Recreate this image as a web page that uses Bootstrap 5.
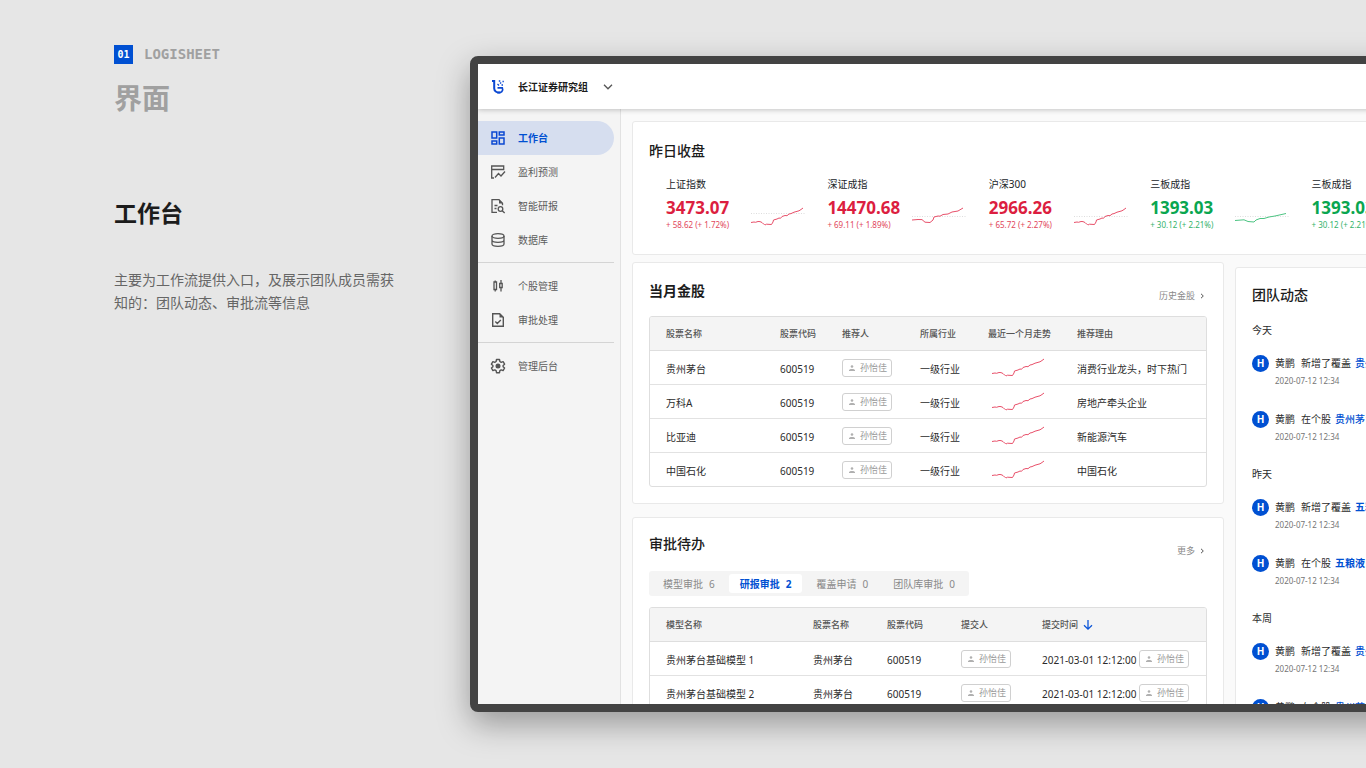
<!DOCTYPE html>
<html lang="zh-CN">
<head>
<meta charset="utf-8">
<meta name="viewport" content="width=device-width, initial-scale=1">
<title>Logisheet 工作台</title>
<link href="https://cdn.jsdelivr.net/npm/bootstrap@5.3.0/dist/css/bootstrap.min.css" rel="stylesheet">
<style>
  :root { --brand: #0050d2; --up: #dc1e40; --down: #0aa650; --line: #e2e2e2; }
  body { font-family: "Noto Sans", "Noto Sans CJK SC", sans-serif; font-size: 10px; line-height: 14px; color: #2b2b2b; background: #e6e6e6; overflow: hidden; }
  a { text-decoration: none; }
  svg { display: block; flex: none; }
  h1, h2, h3, p { margin: 0; }

  .stage { height: 100vh; }
  .intro { width: 470px; padding: 45px 68px 0 114px; flex: none; }
  .intro-no { width: 19px; height: 19px; background: var(--brand); color: #fff; font: bold 10px/19px "DejaVu Sans Mono", monospace; text-align: center; }
  .intro-brand { font: bold 14px/19px "DejaVu Sans Mono", monospace; color: #a0a0a0; }
  .intro h1 { font-size: 28px; line-height: 40px; font-weight: 700; color: #a0a0a0; margin-top: 14px; }
  .intro h2 { font-size: 23px; line-height: 34px; font-weight: 700; color: #1c1c1c; margin-top: 78px; }
  .intro p { font-size: 14px; line-height: 23px; color: #666; margin-top: 38px; }

  .device { margin: 56px -152px 56px 0; border: 8px solid #434343; border-radius: 8px; background: #fafafa; overflow: hidden; min-width: 0; box-shadow: 0 12px 32px rgba(0,0,0,.34); }
  .topbar { height: 45px; flex: none; background: #fff; padding: 0 12px; box-shadow: 0 1px 5px rgba(0,0,0,.22); z-index: 2; position: relative; }
  .team { border: 0; background: none; padding: 0; color: #1c1c1c; font-weight: 700; gap: 15px; }

  .side { width: 143px; flex: none; background: #f4f4f4; border-right: 1px solid var(--line); padding: 12px 6px 0 0; }
  .side a { height: 34px; padding-left: 12px; gap: 12px; color: #5c5c5c; }
  .side a.active { background: #d6deef; color: var(--brand); font-weight: 700; border-radius: 0 17px 17px 0; }
  .side hr { margin: 5px 0 6px; border-top: 1px solid #d4d4d4; opacity: 1; }

  .work { padding: 12px 12px 0 11px; min-width: 0; }
  .panel { background: #fff; border: 1px solid #e9e9e9; border-radius: 3px; padding: 0 16px; }
  .panel h3 { font-size: 14px; line-height: 20px; font-weight: 500; color: #1c1c1c; }
  .quotes { padding-top: 19px; padding-bottom: 23px; }
  .quote-grid { display: grid; grid-template-columns: repeat(5, 1fr); margin: 16px 8px 0 17px; }
  .quote-text { width: 85px; flex: none; white-space: nowrap; }
  .quote-value { font-size: 17px; line-height: 22px; font-weight: 700; margin-top: 6px; }
  .quote-diff { font-size: 8px; line-height: 12px; opacity: .85; }
  .up { color: var(--up); }
  .down { color: var(--down); }
  .quote-grid svg { margin-top: 29px; }

  .columns { margin-top: 7px; gap: 11px; }
  .stack { gap: 13px; min-width: 0; }
  .picks { padding-top: 18px; padding-bottom: 16px; }
  .picks-head { margin-bottom: 13px; }
  .todo { padding-top: 16px; padding-bottom: 16px; }
  .more { font-size: 9px; color: #8a8a8a; gap: 4px; padding: 8px 2px 0 0; }
  .todo .more { padding-top: 10px; }

  .frame { border: 1px solid #dedede; border-radius: 3px; overflow: hidden; }
  .grid-table { width: 100%; table-layout: fixed; border-collapse: separate; border-spacing: 0; }
  .grid-table th, .grid-table td { height: 34px; padding: 0; white-space: nowrap; vertical-align: middle; border-bottom: 1px solid var(--line); }
  .grid-table td { padding-top: 3px; }
  .grid-table th { background: #f4f4f4; font-size: 9px; font-weight: 500; color: #555; border-color: #dedede; }
  .grid-table th:first-child, .grid-table td:first-child { padding-left: 16px; }
  .grid-table tr:last-child td { border-bottom: 0; height: 33px; }
  .grid-table td.mid { padding-top: 0; }
  .tag { display: inline-flex; align-items: center; gap: 4px; height: 18px; padding: 0 4px 0 5px; border: 1px solid #d0d0d0; border-radius: 3px; font-size: 9px; color: #999; vertical-align: middle; }

  .tabs { background: #f4f4f4; border-radius: 3px; padding: 3px; gap: 3px; width: fit-content; margin: 13px 0 11px; }
  .tabs button { border: 0; background: none; height: 19px; padding: 0 11px; gap: 6px; color: #8a8a8a; border-radius: 3px; }
  .tabs button.active { background: #fff; color: var(--brand); font-weight: 700; }

  .feed { width: 263px; flex: none; margin-top: 5px; padding-top: 17px; }
  .feed h3 { margin-bottom: 18px; }
  .feed h4 { font-size: 10px; line-height: 14px; font-weight: 400; margin: 0 0 18px; }
  .feed ul { margin: 0; }
  .feed li { height: 56px; gap: 6px; }
  .face { width: 17px; height: 17px; border-radius: 50%; background: var(--brand); color: #fff; font-weight: 700; line-height: 17px; text-align: center; flex: none; }
  .feed-line { line-height: 17px; white-space: nowrap; }
  .feed-who { margin-right: 6px; }
  .feed-line a { color: var(--brand); font-weight: 500; }
  .feed time { display: block; font-size: 8px; line-height: 12px; color: #757575; margin-top: 3px; }
</style>
</head>
<body>
<svg width="0" height="0" class="position-absolute" aria-hidden="true">
  <symbol id="person" viewBox="0 0 8 8"><circle cx="4" cy="2.500" r="1.300" fill="#b0b0b0"/><path d="M1 7V6.300C1.300 5.200 2.500 4.900 4 4.900S6.700 5.200 7 6.300V7z" fill="#b0b0b0"/></symbol>
  <symbol id="chev" viewBox="0 0 6 6"><path d="M2 .8 4.300 3 2 5.200" fill="none" stroke="#555" stroke-width="1"/></symbol>
  <symbol id="spark" viewBox="0 0 54 22"><path d="M0 16.500 3 16 4.500 16.300 7 15.500 9 15.600 11 16.500 12.500 18 13.500 18.500 14 19 15.500 18.200 20.500 18.500 22 16 22.500 14 26 13 28 12 29.500 12.300 31 10.500 34 9.500 36 9.700 38 8 40 7.600 43 6.200 48 4.800 50 3.500 52 2" fill="none" stroke="#e8506a" stroke-width="1"/></symbol>
</svg>
<div class="stage d-flex">
  <section class="intro">
    <div class="d-flex align-items-center" style="gap:11px"><span class="intro-no">01</span><span class="intro-brand">LOGISHEET</span></div>
    <h1>界面</h1>
    <h2>工作台</h2>
    <p>主要为工作流提供入口，及展示团队成员需获知的：团队动态、审批流等信息</p>
  </section>

  <div class="device d-flex flex-column flex-grow-1">
    <header class="topbar d-flex align-items-center">
      <svg width="16" height="16" viewBox="0 0 16 16" fill="none" stroke="#0b48d2"><path d="M2 2h2.200v7.500c0 3 3 4.300 6 4" stroke-width="2"/><path d="M7.500 8.800h4.800c1.400 3-1 5.300-5 4.800" stroke-width="1.700"/><path d="M7.500 5l1.500 1.500M10 4.500l1.200-1M8.800 2h1.500M12.500 2.500h1.300M11.500 6h1.500" stroke-width="1.300"/></svg>
      <button class="team d-flex align-items-center ms-2 ps-1" type="button">长江证券研究组
        <svg width="10" height="8" viewBox="0 0 10 8"><path d="M1 1.800 5 5.800 9 1.800" fill="none" stroke="#555" stroke-width="1.300"/></svg></button>
    </header>
    <div class="d-flex flex-grow-1" style="min-height:0">
      <nav class="side">
        <a href="#" class="active d-flex align-items-center"><svg width="16" height="16" viewBox="0 0 16 16" fill="none" stroke="#0b48d2" stroke-width="1.500"><path d="M2 2h4.700v6H2zM9.300 2H14v3H9.300zM2 11h4.700v3H2zM9.300 8H14v6H9.300z"/></svg>工作台</a>
        <a href="#" class="d-flex align-items-center"><svg width="16" height="16" viewBox="0 0 16 16" fill="none" stroke="#555" stroke-width="1.300"><path d="M4 14H1.700V2h12v3.500h-12M5 13.500l3.500-4 2.500 2.500 4-4.500"/></svg>盈利预测</a>
        <a href="#" class="d-flex align-items-center"><svg width="16" height="16" viewBox="0 0 16 16" fill="none" stroke="#555" stroke-width="1.300"><path d="M7 14.300H2V1.700h7l3.500 3.500v2M4.500 7.500h3M4.500 10.500h2"/><path d="M9 1.500v4h4z" fill="#555" stroke="none"/><circle cx="10.500" cy="11" r="2.300"/><path d="m12.200 12.700 2.500 2.300"/></svg>智能研报</a>
        <a href="#" class="d-flex align-items-center"><svg width="16" height="16" viewBox="0 0 16 16" fill="none" stroke="#555" stroke-width="1.300"><ellipse cx="8" cy="4" rx="6" ry="2.300"/><path d="M2 4v8c0 1.300 2.700 2.300 6 2.300s6-1 6-2.300V4M2 8c0 1.300 2.700 2.300 6 2.300S14 9.300 14 8"/></svg>数据库</a>
        <hr>
        <a href="#" class="d-flex align-items-center"><svg width="16" height="16" viewBox="0 0 16 16" fill="none" stroke="#555" stroke-width="1.300"><path d="M4 4h2.500v7.500H4zM5.200 2.500V4M5.200 11.500V13.500M9.700 5.500h2.500v4H9.700zM11 2v3.500M11 9.500v4"/></svg>个股管理</a>
        <a href="#" class="d-flex align-items-center"><svg width="16" height="16" viewBox="0 0 16 16" fill="none" stroke="#555" stroke-width="1.400"><path d="M2.700 1.700h7L13.300 5.200v9.100H2.700zM5.300 9.500l2 2 3.500-3.500"/><path d="M9.500 1.500v4h4z" fill="#555" stroke="none"/></svg>审批处理</a>
        <hr>
        <a href="#" class="d-flex align-items-center"><svg width="16" height="16" viewBox="0 0 16 16" fill="none" stroke="#555" stroke-width="1.400" stroke-linejoin="round"><path d="M6.500 1.500h3l.4 2 1.300.8 1.900-.7 1.500 2.600-1.500 1.300v1.200l1.500 1.300-1.500 2.600-1.900-.7-1.300.8-.4 2h-3l-.4-2-1.300-.8-1.900.7L1.400 10l1.500-1.300V7.500L1.400 6.200l1.500-2.600 1.900.7 1.300-.8z"/><circle cx="8" cy="8" r="1.800" fill="#555"/></svg>管理后台</a>
      </nav>

      <main class="work flex-grow-1">
        <section class="panel quotes">
          <h3>昨日收盘</h3>
          <div class="quote-grid">
            <div class="d-flex up"><div class="quote-text"><div class="text-body">上证指数</div><div class="quote-value">3473.07</div><div class="quote-diff">+ 58.62 (+ 1.72%)</div></div><svg width="54" height="24" viewBox="0 0 54 24"><path d="M0 7.500h54" stroke="#ddd" stroke-dasharray="1 1.500"/><use href="#spark" width="54" height="22"/></svg></div>
            <div class="d-flex up"><div class="quote-text"><div class="text-body">深证成指</div><div class="quote-value">14470.68</div><div class="quote-diff">+ 69.11 (+ 1.89%)</div></div><svg width="54" height="24" viewBox="0 0 54 24"><path d="M0 10.500h54" stroke="#ddd" stroke-dasharray="1 1.500"/><path d="M0 14 6 13.500 10 13.600 13 16.200 18 16.500 21 14 22 11 26 10 28 10.200 31 8.500 36 8 40 6 46 5 51 2" fill="none" stroke="#e8506a"/></svg></div>
            <div class="d-flex up"><div class="quote-text"><div class="text-body">沪深300</div><div class="quote-value">2966.26</div><div class="quote-diff">+ 65.72 (+ 2.27%)</div></div><svg width="54" height="24" viewBox="0 0 54 24"><path d="M0 10.500h54" stroke="#ddd" stroke-dasharray="1 1.500"/><use href="#spark" width="54" height="22"/></svg></div>
            <div class="d-flex down"><div class="quote-text"><div class="text-body">三板成指</div><div class="quote-value">1393.03</div><div class="quote-diff">+ 30.12 (+ 2.21%)</div></div><svg width="54" height="24" viewBox="0 0 54 24"><path d="M0 10.500h54" stroke="#ddd" stroke-dasharray="1 1.500"/><path d="M0 14.500 9 13.800 13 15.500 19 16 21 14 25 12.500 29 12.500 34 11 40 10 51 7.500" fill="none" stroke="#4cc482"/></svg></div>
            <div class="d-flex down"><div class="quote-text"><div class="text-body">三板成指</div><div class="quote-value">1393.03</div><div class="quote-diff">+ 30.12 (+ 2.21%)</div></div></div>
          </div>
        </section>

        <div class="columns d-flex align-items-start">
          <div class="stack d-flex flex-column flex-grow-1">
            <section class="panel picks">
              <div class="picks-head d-flex justify-content-between"><h3 class="fw-bold">当月金股</h3><a href="#" class="more d-flex align-items-center">历史金股<svg width="6" height="6"><use href="#chev"/></svg></a></div>
              <div class="frame">
                <table class="grid-table">
                  <colgroup><col style="width:130px"><col style="width:62px"><col style="width:78px"><col style="width:68px"><col style="width:89px"><col></colgroup>
                  <thead><tr><th>股票名称</th><th>股票代码</th><th>推荐人</th><th>所属行业</th><th>最近一个月走势</th><th>推荐理由</th></tr></thead>
                  <tbody>
                    <tr><td>贵州茅台</td><td>600519</td><td class="mid"><span class="tag"><svg width="8" height="8"><use href="#person"/></svg>孙怡佳</span></td><td>一级行业</td><td class="mid"><svg width="54" height="22" class="ms-1"><use href="#spark"/></svg></td><td>消费行业龙头，时下热门</td></tr>
                    <tr><td>万科A</td><td>600519</td><td class="mid"><span class="tag"><svg width="8" height="8"><use href="#person"/></svg>孙怡佳</span></td><td>一级行业</td><td class="mid"><svg width="54" height="22" class="ms-1"><use href="#spark"/></svg></td><td>房地产牵头企业</td></tr>
                    <tr><td>比亚迪</td><td>600519</td><td class="mid"><span class="tag"><svg width="8" height="8"><use href="#person"/></svg>孙怡佳</span></td><td>一级行业</td><td class="mid"><svg width="54" height="22" class="ms-1"><use href="#spark"/></svg></td><td>新能源汽车</td></tr>
                    <tr><td>中国石化</td><td>600519</td><td class="mid"><span class="tag"><svg width="8" height="8"><use href="#person"/></svg>孙怡佳</span></td><td>一级行业</td><td class="mid"><svg width="54" height="22" class="ms-1"><use href="#spark"/></svg></td><td>中国石化</td></tr>
                  </tbody>
                </table>
              </div>
            </section>

            <section class="panel todo">
              <div class="d-flex justify-content-between"><h3>审批待办</h3><a href="#" class="more d-flex align-items-center">更多<svg width="6" height="6"><use href="#chev"/></svg></a></div>
              <div class="tabs d-flex" role="tablist">
                <button type="button" role="tab" class="d-flex align-items-center"><span>模型审批</span><span>6</span></button>
                <button type="button" role="tab" class="active d-flex align-items-center"><span>研报审批</span><span>2</span></button>
                <button type="button" role="tab" class="d-flex align-items-center"><span>覆盖申请</span><span>0</span></button>
                <button type="button" role="tab" class="d-flex align-items-center"><span>团队库审批</span><span>0</span></button>
              </div>
              <div class="frame">
                <table class="grid-table">
                  <colgroup><col style="width:163px"><col style="width:74px"><col style="width:74px"><col style="width:81px"><col style="width:97px"><col></colgroup>
                  <thead><tr><th>模型名称</th><th>股票名称</th><th>股票代码</th><th>提交人</th><th><span class="d-flex align-items-center gap-1">提交时间<svg width="12" height="12" viewBox="0 0 12 12"><path d="M6 1v9M2 6.200l4 4 4-4" fill="none" stroke="#0b55d8" stroke-width="1.300"/></svg></span></th><th></th></tr></thead>
                  <tbody>
                    <tr><td>贵州茅台基础模型 1</td><td>贵州茅台</td><td>600519</td><td class="mid"><span class="tag"><svg width="8" height="8"><use href="#person"/></svg>孙怡佳</span></td><td>2021-03-01 12:12:00</td><td class="mid"><span class="tag"><svg width="8" height="8"><use href="#person"/></svg>孙怡佳</span></td></tr>
                    <tr><td>贵州茅台基础模型 2</td><td>贵州茅台</td><td>600519</td><td class="mid"><span class="tag"><svg width="8" height="8"><use href="#person"/></svg>孙怡佳</span></td><td>2021-03-01 12:12:00</td><td class="mid"><span class="tag"><svg width="8" height="8"><use href="#person"/></svg>孙怡佳</span></td></tr>
                  </tbody>
                </table>
              </div>
            </section>
          </div>

          <aside class="panel feed">
            <h3>团队动态</h3>
            <h4>今天</h4>
            <ul class="list-unstyled">
              <li class="d-flex"><span class="face">H</span><div><div class="feed-line d-flex"><span class="feed-who">黄鹏</span><span class="me-1">新增了覆盖</span><a href="#">贵州茅台</a></div><time>2020-07-12 12:34</time></div></li>
              <li class="d-flex"><span class="face">H</span><div><div class="feed-line d-flex"><span class="feed-who">黄鹏</span><span class="me-1">在个股</span><a href="#">贵州茅台</a></div><time>2020-07-12 12:34</time></div></li>
            </ul>
            <h4>昨天</h4>
            <ul class="list-unstyled">
              <li class="d-flex"><span class="face">H</span><div><div class="feed-line d-flex"><span class="feed-who">黄鹏</span><span class="me-1">新增了覆盖</span><a href="#" class="fw-bold">五粮液</a></div><time>2020-07-12 12:34</time></div></li>
              <li class="d-flex"><span class="face">H</span><div><div class="feed-line d-flex"><span class="feed-who">黄鹏</span><span class="me-1">在个股</span><a href="#" class="fw-bold">五粮液</a></div><time>2020-07-12 12:34</time></div></li>
            </ul>
            <h4>本周</h4>
            <ul class="list-unstyled">
              <li class="d-flex"><span class="face">H</span><div><div class="feed-line d-flex"><span class="feed-who">黄鹏</span><span class="me-1">新增了覆盖</span><a href="#">贵州茅台</a></div><time>2020-07-12 12:34</time></div></li>
              <li class="d-flex"><span class="face">H</span><div><div class="feed-line d-flex"><span class="feed-who">黄鹏</span><span class="me-1">在个股</span><a href="#">贵州茅台</a></div></div></li>
            </ul>
          </aside>
        </div>
      </main>
    </div>
  </div>
</div>
<script src="https://cdn.jsdelivr.net/npm/bootstrap@5.3.0/dist/js/bootstrap.bundle.min.js"></script>
</body>
</html>
